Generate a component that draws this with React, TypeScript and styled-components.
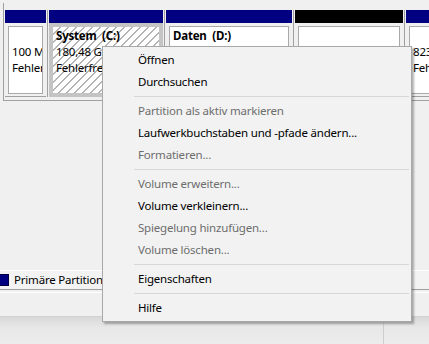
import React from "react"
import styled, { createGlobalStyle } from "styled-components"

const GlobalStyle = createGlobalStyle`
  html, body {
    margin: 0;
    padding: 0;
    background: #f0f0f0;
  }
  body {
    font-family: "Noto Sans", "Liberation Sans", sans-serif;
    font-size: 11.5px;
    letter-spacing: -0.2px;
    color: #000;
    overflow: hidden;
  }
`

const Screen = styled.div`
  position: relative;
  width: 429px;
  height: 344px;
  overflow: hidden;
  display: flex;
  flex-direction: column;
  background: #f0f0f0;
`

const DiskPanel = styled.div`
  margin: 3px 0 0 3px;
  padding: 7px 0 3px 1px;
  border-left: 1px solid #a0a0a0;
  border-bottom: 1px solid #a0a0a0;
  display: flex;
  height: 87px;
`

const Column = styled.div<{ $width: number }>`
  flex: none;
  width: ${(p) => p.$width}px;
  display: flex;
  flex-direction: column;
`

const Header = styled.div<{ $color: string }>`
  height: 13px;
  background: ${(p) => p.$color};
`

const Body = styled.div`
  flex: 1;
  padding: 3px 3px 2px;
  border-bottom: 1px solid #a0a0a0;
  display: flex;
`

const SelectedBody = styled.div`
  flex: 1;
  border: 4px solid #c4c4c4;
  display: flex;
`

const Box = styled.div`
  flex: 1;
  min-width: 0;
  border: 1px solid #a9a9a9;
  background: #fff;
  padding: 1px 3px 0;
  overflow: hidden;
`

const Hatched = styled.div`
  flex: 1;
  min-width: 0;
  padding: 1px 3px 0;
  overflow: hidden;
  background: repeating-linear-gradient(
    135deg,
    #ffffff 0 4.8px,
    #b4b4b4 4.8px 5.66px
  );
`

const Line = styled.div<{ $bold?: boolean }>`
  height: 16px;
  line-height: 16px;
  white-space: pre;
  font-weight: ${(p) => (p.$bold ? 700 : 400)};
`

const Divider = styled.div`
  flex: none;
  width: 1px;
  margin: 0 1px;
  background: #a0a0a0;
`

const Legend = styled.div`
  margin-top: auto;
  border-top: 1px solid #ffffff;
  border-bottom: 1px solid #a0a0a0;
  background: #f3f3f3;
  height: 18px;
  display: flex;
  align-items: center;
  gap: 5px;
`

const Swatch = styled.div`
  width: 12px;
  height: 12px;
  margin-left: -3px;
  background: #000080;
  box-sizing: border-box;
  border: 1px solid #000040;
`

const LegendText = styled.span`
  line-height: 16px;
`

const LegendShine = styled.div`
  height: 1px;
  margin-top: 2px;
  background: #ffffff;
`

const Gap = styled.div`
  height: 23px;
`

const StatusBar = styled.div`
  height: 28px;
  box-sizing: border-box;
  border-top: 1px solid #d2d2d2;
  background: linear-gradient(#d8d8d8, #e8e8e8 40%, #ececec);
  display: flex;
  padding-top: 6px;
`

const StatusPane = styled.div`
  width: 383px;
  border-right: 1px solid #cdcdcd;
`

const Menu = styled.div`
  position: absolute;
  left: 102px;
  top: 46px;
  width: 310px;
  box-sizing: border-box;
  padding: 2px;
  background: #f2f2f2;
  border: 1px solid #a8a8a8;
  box-shadow: 2px 2px 2px rgba(0, 0, 0, 0.3);
`

const Item = styled.div<{ $disabled?: boolean }>`
  height: 22px;
  line-height: 22px;
  padding-left: 33px;
  white-space: nowrap;
  color: ${(p) => (p.$disabled ? "#6d6d6d" : "#000")};
`

const Separator = styled.div`
  height: 7px;
  display: flex;
  align-items: center;
  margin: 0 0 0 29px;

  &::before {
    content: "";
    flex: 1;
    height: 1px;
    background: #d7d7d7;
  }
`

type MenuEntry = { label: string; disabled?: boolean } | "sep"

const entries: MenuEntry[] = [
  { label: "Öffnen" },
  { label: "Durchsuchen" },
  "sep",
  { label: "Partition als aktiv markieren", disabled: true },
  { label: "Laufwerkbuchstaben und -pfade ändern..." },
  { label: "Formatieren...", disabled: true },
  "sep",
  { label: "Volume erweitern...", disabled: true },
  { label: "Volume verkleinern..." },
  { label: "Spiegelung hinzufügen...", disabled: true },
  { label: "Volume löschen...", disabled: true },
  "sep",
  { label: "Eigenschaften" },
  "sep",
  { label: "Hilfe" },
]

export default function App() {
  return (
    <Screen>
      <GlobalStyle />
      <DiskPanel>
        <Column $width={41}>
          <Header $color="#000080" />
          <Body>
            <Box>
              <Line> </Line>
              <Line>100 MB NTFS</Line>
              <Line>Fehlerfrei (System, Aktiv)</Line>
            </Box>
          </Body>
        </Column>
        <Divider />
        <Column $width={114}>
          <Header $color="#000080" />
          <SelectedBody>
            <Hatched>
              <Line $bold>System  (C:)</Line>
              <Line>180,48 GB NTFS</Line>
              <Line>Fehlerfrei (Startpartition)</Line>
            </Hatched>
          </SelectedBody>
        </Column>
        <Divider />
        <Column $width={126}>
          <Header $color="#000080" />
          <Body>
            <Box>
              <Line $bold>Daten  (D:)</Line>
              <Line>284,37 GB NTFS</Line>
              <Line>Fehlerfrei (Primäre Partition)</Line>
            </Box>
          </Body>
        </Column>
        <Divider />
        <Column $width={108}>
          <Header $color="#000000" />
          <Body>
            <Box>
              <Line> </Line>
              <Line>465,76 GB</Line>
              <Line>Nicht zugeordnet</Line>
            </Box>
          </Body>
        </Column>
        <Divider />
        <Column $width={60}>
          <Header $color="#000080" />
          <Body>
            <Box>
              <Line> </Line>
              <Line>823 MB NTFS</Line>
              <Line>Fehlerfrei (Wiederherstellung)</Line>
            </Box>
          </Body>
        </Column>
      </DiskPanel>

      <Legend>
        <Swatch />
        <LegendText>Primäre Partition</LegendText>
      </Legend>
      <LegendShine />
      <Gap />
      <StatusBar>
        <StatusPane />
      </StatusBar>

      <Menu>
        {entries.map((e, i) =>
          e === "sep" ? (
            <Separator key={i} />
          ) : (
            <Item key={i} $disabled={e.disabled}>
              {e.label}
            </Item>
          )
        )}
      </Menu>
    </Screen>
  )
}
